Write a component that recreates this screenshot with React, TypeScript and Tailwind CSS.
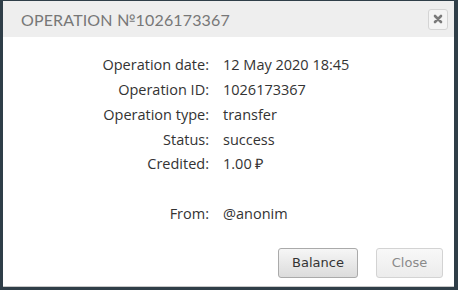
import React from "react";

const rows: [string, string][] = [
  ["Operation date:", "12 May 2020 18:45"],
  ["Operation ID:", "1026173367"],
  ["Operation type:", "transfer"],
  ["Status:", "success"],
  ["Credited:", "1.00 ₽"],
];

export default function App() {
  return (
    <div className="w-[458px] h-[290px] bg-[#2f3e48] pl-[3px] pr-[4px] pt-[1px] pb-[3px] flex">
      <div className="flex-1 bg-white flex flex-col border-b border-[#c8c8c8]">
        <div className="h-[36px] bg-[#eeeeee] flex items-center justify-between pl-[18px] pr-[6px]">
          <div
            className="text-[16px] tracking-[0.15px] text-[#777777] pt-[1px]"
            style={{ fontFamily: "Lato, 'Open Sans', sans-serif" }}
          >
            OPERATION №1026173367
          </div>
          <button className="w-[20px] h-[21px] rounded-[3px] border border-[#d4d4d4] bg-[#f4f4f4] flex items-center justify-center">
            <svg width="10" height="10" viewBox="0 0 10 10">
              <path d="M2 2 L8 8 M8 2 L2 8" stroke="#7a7a7a" strokeWidth="2.6" strokeLinecap="round" />
            </svg>
          </button>
        </div>
        <div
          className="flex-1 flex flex-col pt-[16px] text-[14.5px] text-[#333333]"
          style={{ fontFamily: "'Open Sans', sans-serif" }}
        >
          {rows.map(([l, v]) => (
            <div key={l} className="flex h-[24.7px] items-center">
              <div className="w-[206px] text-right">{l}</div>
              <div className="pl-[14px]">{v}</div>
            </div>
          ))}
          <div className="h-[24.7px]" />
          <div className="flex h-[24.7px] items-center">
            <div className="w-[206px] text-right">From:</div>
            <div className="pl-[14px]">@anonim</div>
          </div>
          <div
            className="flex justify-end gap-[18px] pr-[11px] mt-[22px]"
            style={{ fontFamily: "'DejaVu Sans', sans-serif" }}
          >
            <button className="w-[80px] h-[30px] rounded-[3px] border border-[#aaaaaa] bg-gradient-to-b from-[#f6f6f6] to-[#dcdcdc] text-[13px] text-[#333333]">
              Balance
            </button>
            <button className="w-[67px] h-[30px] rounded-[3px] border border-[#d3d3d3] bg-gradient-to-b from-[#f8f8f8] to-[#ececec] text-[13px] text-[#8a8a8a]">
              Close
            </button>
          </div>
        </div>
      </div>
    </div>
  );
}
